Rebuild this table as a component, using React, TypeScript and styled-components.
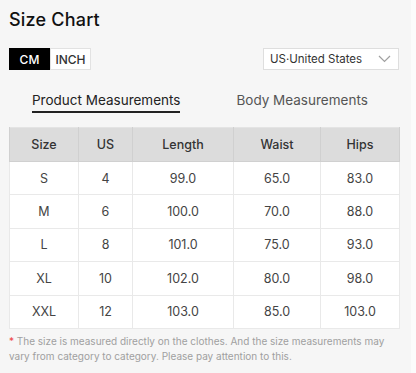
import styled, { createGlobalStyle } from "styled-components";

const GlobalStyle = createGlobalStyle`
    html, body {
        margin: 0;
        padding: 0;
        background: #fbfbfb;
    }
    body {
        font-family: Inter, "Open Sans", "Liberation Sans", sans-serif;
    }
`

const columns = ["Size", "US", "Length", "Waist", "Hips"];
const widths = [69, 54, 101, 87, 79];

const rows = [
    ["S", "4", "99.0", "65.0", "83.0"],
    ["M", "6", "100.0", "70.0", "88.0"],
    ["L", "8", "101.0", "75.0", "93.0"],
    ["XL", "10", "102.0", "80.0", "98.0"],
    ["XXL", "12", "103.0", "85.0", "103.0"],
];

const App = () => {
    return <>
        <GlobalStyle />
        <Panel>
            <Title>Size Chart</Title>
            <Controls>
                <Toggle>
                    <ToggleButton $active>CM</ToggleButton>
                    <ToggleButton>INCH</ToggleButton>
                </Toggle>
                <Select>
                    <span>US·United States</span>
                    <svg width="13" height="8" viewBox="0 0 13 8" fill="none">
                        <path d="M1 1l5.5 5.5L12 1" stroke="#a0a0a0" strokeWidth="1.2" />
                    </svg>
                </Select>
            </Controls>
            <Tabs>
                <Tab $active>Product Measurements</Tab>
                <Tab>Body Measurements</Tab>
            </Tabs>
            <Table>
                <colgroup>
                    {widths.map((w, i) => <col key={i} style={{ width: w }} />)}
                </colgroup>
                <thead>
                    <tr>
                        {columns.map(c => <Th key={c}>{c}</Th>)}
                    </tr>
                </thead>
                <tbody>
                    {rows.map(r => <tr key={r[0]}>
                        {r.map((v, i) => <Td key={i}>{v}</Td>)}
                    </tr>)}
                </tbody>
            </Table>
            <Note>
                <Star>*</Star> The size is measured directly on the clothes. And the size measurements may<br />
                vary from category to category. Please pay attention to this.
            </Note>
        </Panel>
    </>
};

const Panel = styled.div`
    width: 411px;
    height: 373px;
    box-sizing: border-box;
    background: #f6f6f6;
    padding: 9px 12px 0 9px;
`

const Title = styled.h2`
    margin: 0;
    font-size: 18px;
    font-weight: 500;
    letter-spacing: 0.2px;
    color: #111;
    line-height: 21px;
`

const Controls = styled.div`
    display: flex;
    justify-content: space-between;
    align-items: center;
    margin-top: 18px;
`

const Toggle = styled.div`
    display: flex;
`

const ToggleButton = styled.div<{ $active?: boolean }>`
    height: 22px;
    width: 41px;
    box-sizing: border-box;
    display: flex;
    align-items: center;
    justify-content: center;
    font-size: 12px;
    font-weight: 500;
    background: ${p => p.$active ? "#000" : "#fff"};
    color: ${p => p.$active ? "#fff" : "#333"};
    border: 1px solid ${p => p.$active ? "#000" : "#e2e2e2"};
`

const Select = styled.div`
    width: 136px;
    height: 22px;
    box-sizing: border-box;
    border: 1px solid #dedede;
    background: #fff;
    display: flex;
    align-items: center;
    justify-content: space-between;
    padding: 0 7px 0 6px;
    font-size: 11.5px;
    color: #333;
`

const Tabs = styled.div`
    display: flex;
    gap: 56px;
    padding-left: 23px;
    margin-top: 21px;
`

const Tab = styled.div<{ $active?: boolean }>`
    font-size: 13.5px;
    line-height: 18px;
    padding-bottom: 2px;
    color: ${p => p.$active ? "#222" : "#555"};
    border-bottom: 2px solid ${p => p.$active ? "#222" : "transparent"};
`

const Table = styled.table`
    margin-top: 14px;
    width: 390px;
    border-collapse: collapse;
    table-layout: fixed;
    background: #fff;
    border: 1px solid #e4e4e4;
`

const Th = styled.th`
    height: 33px;
    padding: 0;
    background: #dcdcdc;
    font-size: 12.5px;
    font-weight: 500;
    color: #333;
    border: 1px solid #d0d0d0;
    border-top: none;
`

const Td = styled.td`
    height: 32.4px;
    padding: 0;
    text-align: center;
    font-size: 12.5px;
    color: #444;
    border: 1px solid #e9e9e9;
`

const Note = styled.p`
    margin: 5px 0 0;
    font-size: 10px;
    line-height: 15px;
    white-space: nowrap;
    color: #a0a0a0;
`

const Star = styled.span`
    color: #e44;
`

export default App;
